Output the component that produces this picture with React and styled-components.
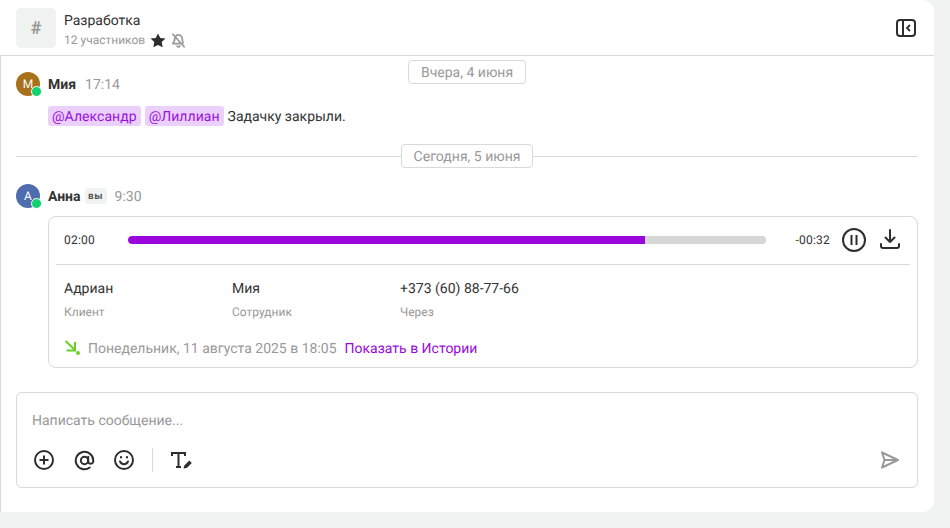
import React from "react";
import styled, { createGlobalStyle } from "styled-components";

const GlobalStyle = createGlobalStyle`
  html, body {
    margin: 0;
    padding: 0;
    background: #f1f3f2;
  }
  * {
    box-sizing: border-box;
  }
`;

const Panel = styled.div`
  width: 934px;
  height: 512px;
  background: #fff;
  border-radius: 0 12px 12px 0;
  font-family: Roboto, "Noto Sans", sans-serif;
  text-rendering: geometricPrecision;
  color: #333;
  position: relative;
  display: flex;
  flex-direction: column;
`;
const Header = styled.div`
  height: 56px;
  flex: none;
  padding: 8px 16px 0;
  border-bottom: 1px solid #d9d9d9;
  display: flex;
  align-items: flex-start;
`;
const ChannelIcon = styled.div`
  width: 40px;
  height: 40px;
  border-radius: 5px;
  background: #f1f3f2;
  color: #999;
  font-size: 18px;
  font-weight: 700;
  display: flex;
  align-items: center;
  justify-content: center;
`;
const HeaderInfo = styled.div`
  margin-left: 8px;
  flex: 1;
  display: flex;
  flex-direction: column;
`;
const ChannelName = styled.div`
  font-size: 14px;
  height: 24px;
  line-height: 26px;
`;
const ChannelMeta = styled.div`
  font-size: 12px;
  line-height: 16px;
  color: #999;
  display: flex;
  align-items: center;
  gap: 5px;
`;
const CollapseButton = styled.div`
  margin: 10px 2px 0 0;
  width: 20px;
  height: 20px;
  display: flex;
`;
const Body = styled.div`
  flex: 1;
  border-left: 1px solid #d9d9d9;
  padding: 16px 16px 24px 15px;
  display: flex;
  flex-direction: column;
`;
const FloatingDate = styled.div`
  position: absolute;
  top: 60px;
  left: 408px;
`;
const DatePill = styled.div`
  height: 24px;
  padding: 2px 12px 0;
  background: #fff;
  border: 1px solid #d9d9d9;
  border-radius: 4px;
  font-size: 14px;
  color: #999;
  display: flex;
  align-items: center;
  white-space: nowrap;
`;
const MessageHead = styled.div`
  height: 24px;
  display: flex;
  align-items: center;
`;
const Avatar = styled.div`
  width: 24px;
  height: 24px;
  border-radius: 50%;
  background: ${(p) => p.$bg};
  color: #fff;
  font-size: 12px;
  display: flex;
  align-items: center;
  justify-content: center;
  position: relative;
  margin-right: 8px;
`;
const OnlineDot = styled.span`
  position: absolute;
  right: -1.5px;
  bottom: -1px;
  width: 11px;
  height: 11px;
  border-radius: 50%;
  background: #12d26f;
  border: 1.5px solid #fff;
`;
const Author = styled.span`
  padding-top: 2px;
  font-size: 14px;
  font-weight: 700;
  color: #333;
`;
const YouBadge = styled.span`
  margin-left: 4px;
  width: 22px;
  height: 16px;
  background: #f1f3f2;
  border-radius: 2px;
  font-size: 10px;
  font-weight: 700;
  letter-spacing: 0.5px;
  color: #555;
  display: flex;
  align-items: center;
  justify-content: center;
`;
const Time = styled.span`
  margin-left: ${(p) => p.$gap}px;
  padding-top: 2px;
  font-size: 14px;
  color: #999;
`;
const MessageText = styled.div`
  margin: 10px 0 0 32px;
  font-size: 14px;
  height: 20px;
  line-height: 22px;
  display: flex;
  gap: 4px;
`;
const Mention = styled.span`
  padding: 0 4px;
  background: #ead0fb;
  border-radius: 3px;
  color: #9b10df;
  letter-spacing: 0.05px;
`;
const DateDivider = styled.div`
  margin-top: 18px;
  height: 24px;
  display: flex;
  align-items: center;
  justify-content: center;
  position: relative;
  &::before {
    content: "";
    position: absolute;
    left: 0;
    right: 0;
    top: 12px;
    height: 1px;
    background: #d9d9d9;
  }
`;
const DividerPill = styled(DatePill)`
  position: relative;
`;
const SecondMessage = styled.div`
  margin-top: 16px;
`;
const CallCard = styled.div`
  margin: 8px 0 0 32px;
  height: 152px;
  border: 1px solid #d9d9d9;
  border-radius: 8px;
  padding: 0 7px;
`;
const Player = styled.div`
  height: 48px;
  padding: 0 8px 1px;
  border-bottom: 1px solid #d9d9d9;
  display: flex;
  align-items: center;
`;
const PlayerTime = styled.span`
  font-size: 12px;
  letter-spacing: 0.2px;
  color: #333;
  width: 64px;
`;
const Track = styled.div`
  width: 638px;
  height: 8px;
  border-radius: 4px;
  background: #d6d6d6;
  overflow: hidden;
`;
const Progress = styled.div`
  height: 100%;
  background: #9b06df;
  border-radius: 4px 0 0 4px;
`;
const Remaining = styled.span`
  width: 64px;
  text-align: right;
  font-size: 12px;
  letter-spacing: 0.2px;
  color: #333;
`;
const PlayerIcons = styled.div`
  margin-left: 12px;
  display: flex;
  align-items: center;
  gap: 12px;
`;
const Participants = styled.div`
  padding: 13px 8px 0;
  display: flex;
`;
const Participant = styled.div`
  width: 168px;
`;
const ParticipantName = styled.div`
  font-size: 14px;
  height: 20px;
  line-height: 22px;
  color: #333;
`;
const ParticipantRole = styled.div`
  margin-top: 6px;
  font-size: 12px;
  line-height: 16px;
  color: #999;
`;
const CallFooter = styled.div`
  margin-top: 17px;
  padding: 0 8px;
  height: 24px;
  display: flex;
  align-items: center;
  font-size: 14px;
  color: #999;
`;
const CallArrow = styled.span`
  width: 24px;
  display: flex;
`;
const HistoryLink = styled.a`
  margin-left: 8px;
  color: #9b06df;
`;
const Composer = styled.div`
  margin-top: auto;
  height: 96px;
  border: 1px solid #d9d9d9;
  border-radius: 6px;
  padding: 0 15px;
  display: flex;
  flex-direction: column;
`;
const Placeholder = styled.div`
  margin-top: 17px;
  height: 20px;
  line-height: 22px;
  font-size: 14px;
  color: #999;
`;
const Toolbar = styled.div`
  margin-top: 18px;
  height: 24px;
  display: flex;
  align-items: center;
`;
const ToolButton = styled.span`
  width: 24px;
  height: 24px;
  margin-left: ${(p) => p.$gap || 0}px;
  display: flex;
  align-items: center;
  justify-content: center;
`;
const ToolSeparator = styled.span`
  width: 1px;
  height: 24px;
  margin-left: 16px;
  background: #d9d9d9;
`;
const SendButton = styled.span`
  margin-left: auto;
  width: 24px;
  height: 24px;
  display: flex;
`;

function App() {
  return (
    <>
      <GlobalStyle />
      <Panel>
        <Header>
          <ChannelIcon>#</ChannelIcon>
          <HeaderInfo>
            <ChannelName>Разработка</ChannelName>
            <ChannelMeta>
              12 участников
              <svg width="16" height="15" viewBox="0 0 16 15" fill="#2e2e2e">
                <path d="M8 .4l2.300 4.500 5.200.7-3.800 3.500 1 5.100L8 11.900l-4.700 2.300 1-5.100L.5 5.600l5.200-.7z" />
              </svg>
              <svg width="15" height="15" viewBox="0 0 24 24" fill="none" stroke="#999" strokeWidth="2.800" strokeLinecap="round" strokeLinejoin="round">
                <path d="M3 2l18 20M8 4.500A6 6 0 0 1 18 9c0 3 .6 5.200 1.400 6.800M6.200 7.500C6 8 6 8.500 6 9c0 5-2.500 7-3 8h14" />
                <path d="M10 21a2.200 2.200 0 0 0 4 0" />
              </svg>
            </ChannelMeta>
          </HeaderInfo>
          <CollapseButton>
            <svg width="20" height="20" viewBox="0 0 20 20" fill="none" stroke="#2e2e2e" strokeWidth="2">
              <rect x="1" y="2" width="18" height="16" rx="3" />
              <path d="M7 2v16" />
              <path d="M14 7l-3 3 3 3" strokeWidth="1.800" />
            </svg>
          </CollapseButton>
        </Header>
        <FloatingDate>
          <DatePill>Вчера, 4 июня</DatePill>
        </FloatingDate>
        <Body>
          <MessageHead>
            <Avatar $bg="#a8711c">
              М
              <OnlineDot />
            </Avatar>
            <Author>Мия</Author>
            <Time $gap={9}>17:14</Time>
          </MessageHead>
          <MessageText>
            <Mention>@Александр</Mention>
            <Mention>@Лиллиан</Mention>
            <span>Задачку закрыли.</span>
          </MessageText>
          <DateDivider>
            <DividerPill>Сегодня, 5 июня</DividerPill>
          </DateDivider>
          <SecondMessage>
            <MessageHead>
              <Avatar $bg="#4f6cae">
                А
                <OnlineDot />
              </Avatar>
              <Author>Анна</Author>
              <YouBadge>вы</YouBadge>
              <Time $gap={8}>9:30</Time>
            </MessageHead>
            <CallCard>
              <Player>
                <PlayerTime>02:00</PlayerTime>
                <Track>
                  <Progress style={{ width: "81%" }} />
                </Track>
                <Remaining>-00:32</Remaining>
                <PlayerIcons>
                  <svg width="24" height="24" viewBox="0 0 24 24" fill="none" stroke="#2e2e2e" strokeWidth="2">
                    <circle cx="12" cy="12" r="11" />
                    <path d="M9.500 7v10M14.500 7v10" />
                  </svg>
                  <svg width="24" height="24" viewBox="0 0 24 24" fill="none" stroke="#2e2e2e" strokeWidth="2" strokeLinecap="round" strokeLinejoin="round">
                    <path d="M12 2v12M7.500 9.500L12 14l4.500-4.500" />
                    <path d="M3 16v2a2 2 0 0 0 2 2h14a2 2 0 0 0 2-2v-2" />
                  </svg>
                </PlayerIcons>
              </Player>
              <Participants>
                <Participant>
                  <ParticipantName>Адриан</ParticipantName>
                  <ParticipantRole>Клиент</ParticipantRole>
                </Participant>
                <Participant>
                  <ParticipantName>Мия</ParticipantName>
                  <ParticipantRole>Сотрудник</ParticipantRole>
                </Participant>
                <Participant>
                  <ParticipantName>+373 (60) 88-77-66</ParticipantName>
                  <ParticipantRole>Через</ParticipantRole>
                </Participant>
              </Participants>
              <CallFooter>
                <CallArrow>
                  <svg width="20" height="20" viewBox="0 0 20 20" fill="none" stroke="#6bd024" strokeWidth="2">
                    <path d="M1.500 2l9 8.500M2.500 11.500h8.500V3" />
                    <circle cx="14" cy="14" r="2" fill="#6bd024" stroke="none" />
                  </svg>
                </CallArrow>
                Понедельник, 11 августа 2025 в 18:05
                <HistoryLink>Показать в Истории</HistoryLink>
              </CallFooter>
            </CallCard>
          </SecondMessage>
          <Composer>
            <Placeholder>Написать сообщение...</Placeholder>
            <Toolbar>
              <ToolButton>
                <svg width="22" height="22" viewBox="0 0 22 22" fill="none" stroke="#2e2e2e" strokeWidth="2">
                  <circle cx="11" cy="11" r="9" />
                  <path d="M11 6.500v9M6.500 11h9" />
                </svg>
              </ToolButton>
              <ToolButton $gap={16}>
                <svg width="21" height="21" viewBox="0 0 24 24" fill="none" stroke="#2e2e2e" strokeWidth="2.300" strokeLinecap="round">
                  <circle cx="12" cy="12" r="4.200" />
                  <path d="M16.200 7.800v5.700a3 3 0 0 0 5.800 0V12a10 10 0 1 0-4 8" />
                </svg>
              </ToolButton>
              <ToolButton $gap={16}>
                <svg width="22" height="22" viewBox="0 0 22 22" fill="none" stroke="#2e2e2e" strokeWidth="2" strokeLinecap="round">
                  <circle cx="11" cy="11" r="9" />
                  <path d="M7 12.500c.9 1.800 2.400 2.700 4 2.700s3.100-.9 4-2.700" />
                  <path d="M8 8v.5M14 8v.5" strokeWidth="2.200" />
                </svg>
              </ToolButton>
              <ToolSeparator />
              <ToolButton $gap={17}>
                <svg width="22" height="22" viewBox="0 0 22 22" fill="none" stroke="#2e2e2e" strokeWidth="2">
                  <path d="M1 7V4h13v3M7.500 4v14M5 18h5" />
                  <path d="M12.500 19.500l.8-3 5-5 2.500 2.500-5 5z" fill="#2e2e2e" stroke="none" />
                </svg>
              </ToolButton>
              <SendButton>
                <svg width="24" height="24" viewBox="0 0 24 24" fill="none" stroke="#999" strokeWidth="2" strokeLinejoin="round">
                  <path d="M4 4.500L20 12 4 19.500 6.500 12z" />
                  <path d="M6.500 12H20" />
                </svg>
              </SendButton>
            </Toolbar>
          </Composer>
        </Body>
      </Panel>
    </>
  );
}

export default App;
